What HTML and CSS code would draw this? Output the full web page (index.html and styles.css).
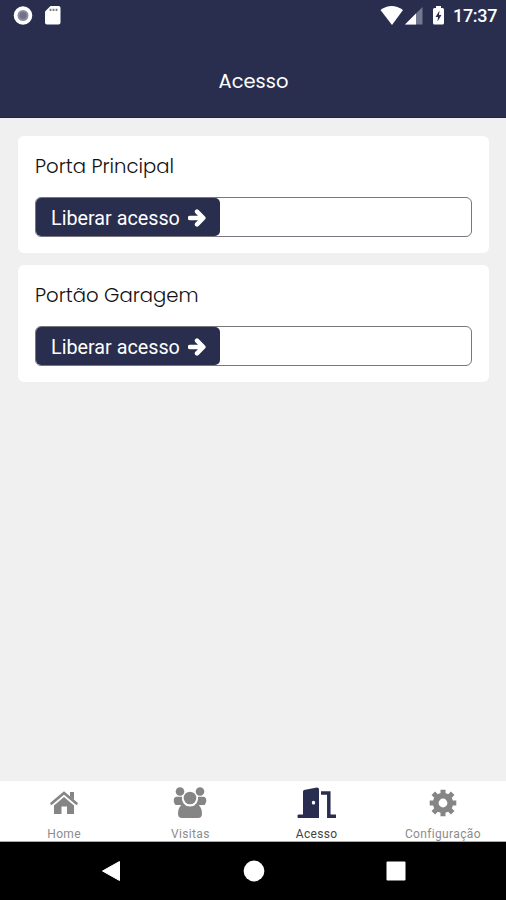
FILE: index.html
```html
<!DOCTYPE html>
<html lang="pt-BR">
<head>
<meta charset="utf-8">
<title>Acesso</title>
<link rel="stylesheet" href="styles.css">
</head>
<body>
<header class="header">
  <div class="status">
    <svg class="status-left" width="64" height="32" viewBox="0 0 64 32">
      <circle cx="23" cy="15.500" r="9.300" fill="#fff"/>
      <circle cx="23" cy="15.500" r="5.500" fill="#8b8ea3"/>
      <circle cx="23" cy="15.500" r="3.500" fill="#6f7288"/>
      <path d="M50.500 6H58.500Q60.500 6 60.500 8V22.500Q60.500 24.500 58.500 24.500H47Q45 24.500 45 22.500V11.500Z" fill="#fff"/>
      <path d="M50.500 8.800V11M53.500 8.800V11M56.500 8.800V11" stroke="#777b82" stroke-width="1.800"/>
    </svg>
    <svg class="status-right" width="72" height="32" viewBox="378 0 72 32">
      <path d="M380.500 10Q391.500 2 403 10L392 25Z" fill="#fff"/>
      <path d="M422.500 7V24.500H405Z" fill="#747992"/>
      <path d="M416 13.500V24.500H405Z" fill="#fff"/>
      <path d="M436 6H441V8H442.500Q444 8 444 9.500V23Q444 24.500 442.500 24.500H434.500Q433 24.500 433 23V9.500Q433 8 434.500 8H436Z" fill="#fff"/>
      <path d="M439.500 10.500L435.500 17H438L437.500 21.500L441.500 15H439Z" fill="#292e4e"/>
    </svg>
    <span class="clock">17:37</span>
  </div>
  <h1 class="title">Acesso</h1>
</header>
<main class="content">
  <section class="card">
    <h2 class="card-title">Porta Principal</h2>
    <div class="track">
      <button class="slide">Liberar acesso
        <svg class="arrow" width="18" height="18" viewBox="0 0 18 18"><path d="M2 9H14M9 2.600L15.400 9L9 15.400" fill="none" stroke="#fff" stroke-width="4.400" stroke-linecap="round" stroke-linejoin="round"/></svg>
      </button>
    </div>
  </section>
  <section class="card">
    <h2 class="card-title">Portão Garagem</h2>
    <div class="track">
      <button class="slide">Liberar acesso
        <svg class="arrow" width="18" height="18" viewBox="0 0 18 18"><path d="M2 9H14M9 2.600L15.400 9L9 15.400" fill="none" stroke="#fff" stroke-width="4.400" stroke-linecap="round" stroke-linejoin="round"/></svg>
      </button>
    </div>
  </section>
</main>
<nav class="tabs">
  <a class="tab">
    <svg width="40" height="36" viewBox="44 785 40 36" fill="#858585">
      <path d="M51.500 803.500L64 793L76.500 803.500" fill="none" stroke="#858585" stroke-width="2.600" stroke-linecap="round"/>
      <path d="M70 792H74V800L70 796.500Z"/>
      <path d="M64 797L74 805.500V814H67V806.500H61.500V814H54V805.500Z"/>
    </svg>
    <span class="label">Home</span>
  </a>
  <a class="tab">
    <svg width="40" height="36" viewBox="170.500 785 40 36" fill="#858585">
      <circle cx="180.500" cy="791.500" r="4.300"/><circle cx="200.500" cy="791.500" r="4.300"/>
      <path d="M177 796.800H182.500Q182 802 185.500 805H176Q173.500 802 174.500 798.500Q175.200 796.800 177 796.800ZM204 796.800H198.500Q199 802 195.500 805H205Q207.500 802 206.500 798.500Q205.800 796.800 204 796.800Z"/>
      <circle cx="190.500" cy="798" r="6.300"/>
      <path d="M184 804Q190.500 809 197 804Q202.500 806 202.500 813.500Q202.500 818 198.500 818H182.500Q178.500 818 178.500 813.500Q178.500 806 184 804Z"/>
    </svg>
    <span class="label">Visitas</span>
  </a>
  <a class="tab active">
    <svg width="44" height="36" viewBox="295 785 44 36">
      <path fill-rule="evenodd" fill="#292e50" d="M304 790L317 787.500Q319 787.500 319 789.500V818H298Q297.500 818 297.500 816V815.500Q297.500 814.500 299 814.500H303V791.500Q303 790.500 304 790ZM313.500 800.800A1.700 1.900 0 1 0 313.500 804.600A1.700 1.900 0 1 0 313.500 800.800Z"/>
      <path d="M321 793H328.800V816.300H336" fill="none" stroke="#292e50" stroke-width="3.500"/>
    </svg>
    <span class="label">Acesso</span>
  </a>
  <a class="tab">
    <svg width="40" height="36" viewBox="-20 -18 40 36">
      <circle r="7.300" fill="none" stroke="#858585" stroke-width="5.800"/>
      <g stroke="#858585" stroke-width="5"><path d="M0-13.300V-8M0 13.300V8M-13.300 0H-8M13.300 0H8"/><path d="M-9.700-9.700L-6-6M9.700 9.700L6 6M-9.700 9.700L-6 6M9.700-9.700L6-6"/></g>
    </svg>
    <span class="label">Configuração</span>
  </a>
</nav>
<footer class="system">
  <svg width="24" height="24" viewBox="-12 -12 24 24"><path d="M-8.500 0L8.500-9.500V9.500Z" fill="#fff" stroke="#fff" stroke-linejoin="round"/></svg>
  <svg width="24" height="24" viewBox="-12 -12 24 24"><circle r="10.400" fill="#fff"/></svg>
  <svg width="24" height="24" viewBox="-12 -12 24 24"><rect x="-9.500" y="-9.500" width="19" height="19" rx="1" fill="#fff"/></svg>
</footer>
</body>
</html>
```
FILE: styles.css
```css
* { box-sizing: border-box; }
body {
  margin: 0;
  width: 506px;
  height: 900px;
  display: flex;
  flex-direction: column;
  background: #f0f0f0;
  font-family: Roboto, sans-serif;
}
svg { display: block; flex: none; }
.header {
  height: 118px;
  background: #292e4e;
  color: #fff;
  border-bottom: 1px solid #20243f;
}
.status { height: 32px; display: flex; }
.status-right { margin-left: auto; }
.clock {
  width: 56px;
  padding-left: 3px;
  font-size: 18px;
  line-height: 32px;
  letter-spacing: -0.3px;
  font-weight: 500;
}
.title, .card-title {
  margin: 0;
  font-family: Poppins, Inter, sans-serif;
}
.title {
  padding: 35px 0 0 1px;
  font-size: 19.5px;
  line-height: 30px;
  font-weight: 400;
  text-align: center;
}
.content {
  flex: 1;
  padding: 18px 17px 0 18px;
  display: flex;
  flex-direction: column;
  gap: 12px;
}
.card {
  height: 117px;
  padding: 15px 17px;
  background: #fff;
  border-radius: 6px;
}
.card-title {
  height: 46px;
  font-size: 19.65px;
  line-height: 30px;
  font-weight: 300;
  color: #111;
}
.track {
  height: 40px;
  border: 1px solid #77777d;
  border-radius: 6px;
}
.slide {
  width: 184px;
  height: 38px;
  padding: 2px 0 0 15px;
  display: flex;
  align-items: center;
  gap: 8px;
  border: 0;
  border-radius: 5px;
  background: #292e4e;
  color: #fff;
  font: 400 19.75px Roboto, sans-serif;
  white-space: nowrap;
}
.arrow { margin-top: -1px; }
.tabs {
  height: 61px;
  padding-left: 1px;
  display: grid;
  grid-template-columns: repeat(4, 1fr);
  background: #fff;
  border-bottom: 1px solid #aaa;
}
.tab {
  display: flex;
  flex-direction: column;
  align-items: center;
  padding-top: 4px;
  color: #8c8c8c;
}
.label {
  font-size: 12px;
  line-height: 16px;
  padding-top: 5px;
  letter-spacing: 0.35px;
}
.active { color: #444; }
.system {
  height: 58px;
  padding: 0 98px 0 99px;
  display: flex;
  align-items: center;
  justify-content: space-between;
  background: #000;
}
```
